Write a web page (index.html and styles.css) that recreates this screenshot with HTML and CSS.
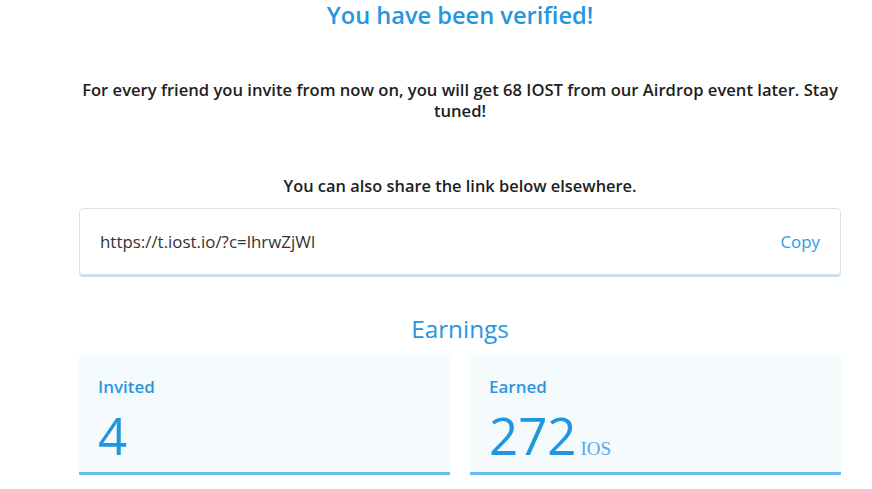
FILE: index.html
```html
<!DOCTYPE html>
<html>
<head>
<meta charset="utf-8">
<link rel="stylesheet" href="styles.css">
</head>
<body>
<main class="page">
  <h1 class="title">You have been verified!</h1>
  <p class="info">For every friend you invite from now on, you will get 68 IOST from our Airdrop event later. Stay tuned!</p>
  <p class="share">You can also share the link below elsewhere.</p>
  <div class="link-box">
    <span class="link">https://t.iost.io/?c=lhrwZjWI</span>
    <span class="copy">Copy</span>
  </div>
  <h2 class="section">Earnings</h2>
  <div class="cards">
    <div class="card">
      <div class="label">Invited</div>
      <div class="value">4</div>
    </div>
    <div class="card">
      <div class="label">Earned</div>
      <div class="value">272<span class="unit">IOS</span></div>
    </div>
  </div>
</main>
</body>
</html>
```
FILE: styles.css
```css
html, body {
  margin: 0;
  padding: 0;
  background: #fff;
}
body {
  font-family: "Open Sans", "Noto Sans", sans-serif;
  color: #222;
  overflow: hidden;
}
.page {
  width: 762px;
  margin-left: 79px;
  display: flex;
  flex-direction: column;
}
.title {
  margin: 0;
  height: 30px;
  line-height: 30px;
  text-align: center;
  font-size: 23.6px;
  font-weight: 600;
  color: #2496e2;
}
.info {
  margin: 49px 0 0;
  text-align: center;
  font-size: 16.6px;
  font-weight: 600;
  line-height: 21px;
  color: #1e1e1e;
}
.share {
  margin: 54px 0 0;
  text-align: center;
  font-size: 16.4px;
  font-weight: 600;
  line-height: 21px;
  color: #1e1e1e;
}
.link-box {
  margin-top: 12px;
  height: 67px;
  border: 1px solid #dcdfe3;
  border-radius: 4px;
  box-shadow: 0 2px 0 #bfe0f8;
  display: flex;
  align-items: center;
  justify-content: space-between;
  padding: 0 20px 0 20px;
  box-sizing: border-box;
}
.link {
  font-size: 16.9px;
  color: #333;
}
.copy {
  font-size: 16.9px;
  color: #2d9be6;
}
.section {
  margin: 39px 0 0;
  text-align: center;
  font-size: 24.3px;
  font-weight: 500;
  line-height: 30px;
  color: #2496e2;
}
.cards {
  margin-top: 12px;
  display: grid;
  grid-template-columns: 1fr 1fr;
  gap: 20px;
}
.card {
  background: #f5fafd;
  border-bottom: 3px solid #6cbcf0;
  height: 119px;
  box-sizing: border-box;
  padding: 20px 19px 0;
}
.label {
  font-size: 17px;
  font-weight: 600;
  color: #2b96e0;
  line-height: 22px;
}
.value {
  margin-top: 8px;
  font-size: 51px;
  line-height: 58px;
  color: #2196e0;
  font-weight: 400;
}
.unit {
  font-family: "Liberation Serif", serif;
  font-size: 19px;
  color: #5aa9e6;
  margin-left: 4px;
}
```
